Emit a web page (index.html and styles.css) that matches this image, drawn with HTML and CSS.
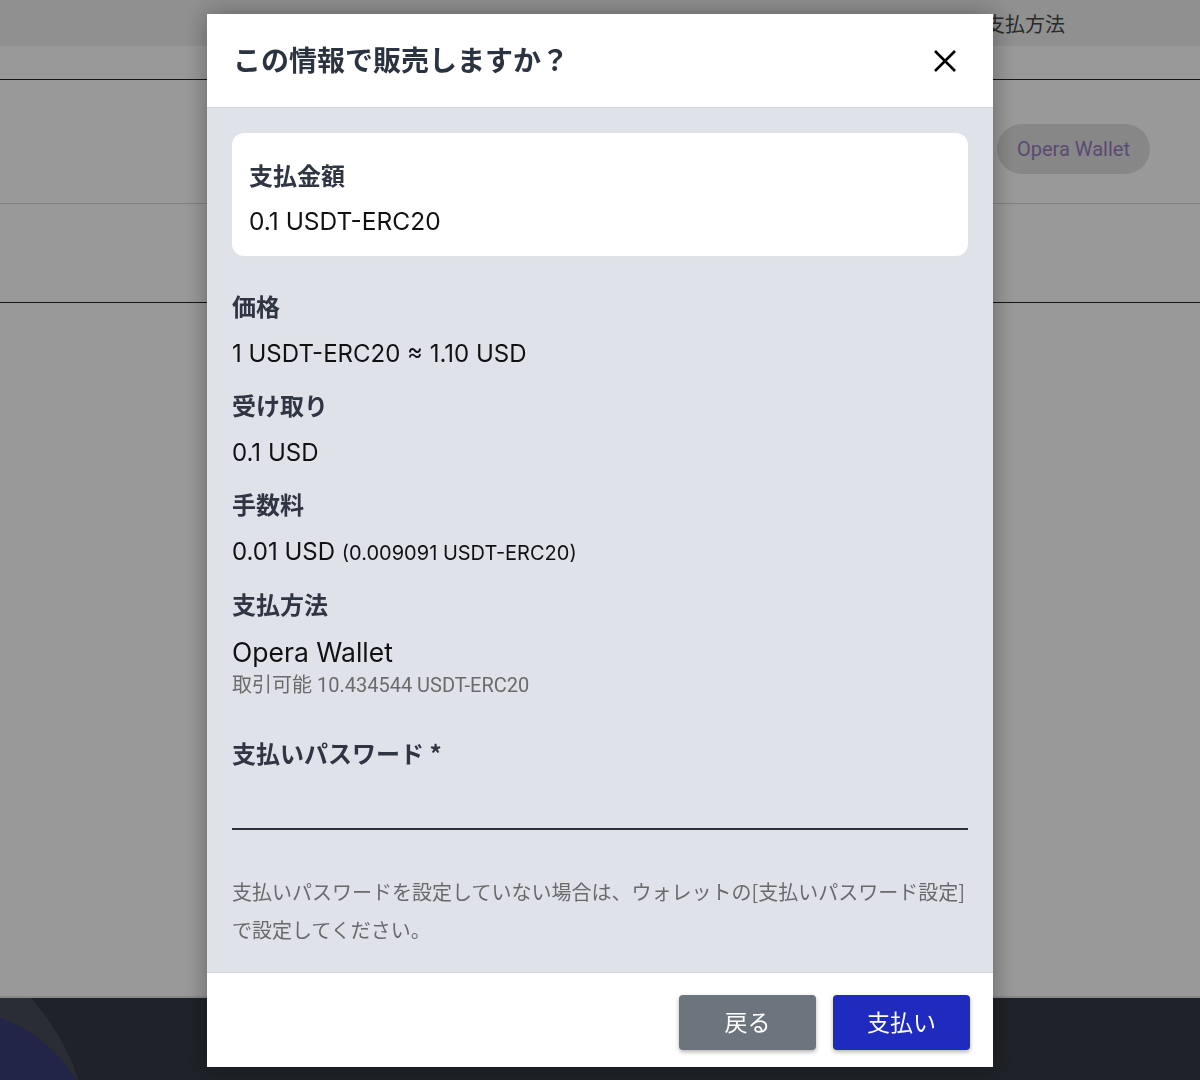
FILE: index.html
```html
<!DOCTYPE html>
<html lang="ja">
<head>
  <meta charset="UTF-8" />
  <title>販売確認</title>
  <link rel="stylesheet" href="styles.css">
</head>
<body>

  <div class="page">
    <div class="table-head">
      <span>通貨</span>
      <span>受け取り金額</span>
      <span>支払方法</span>
    </div>
    <div class="table-sub"></div>
    <div class="table-row first">
      <span class="chip">Opera Wallet</span>
    </div>
    <div class="table-row second"></div>
    <div class="spacer"></div>
    <div class="site-footer">
      <div class="deco-ring"></div>
      <div class="deco-circle"></div>
    </div>
  </div>

  <div class="overlay">
    <div class="modal">
      <div class="modal-header">
        <h2>この情報で販売しますか？</h2>
        <button class="close-btn" aria-label="閉じる">
          <svg width="24" height="24" viewBox="0 0 24 24">
            <path d="M2 2 L22 22 M22 2 L2 22" stroke="#000" stroke-width="2.6" fill="none" />
          </svg>
        </button>
      </div>

      <div class="modal-body">
        <div class="card">
          <div class="label">支払金額</div>
          <div class="value">0.1 USDT-ERC20</div>
        </div>

        <div class="item">
          <div class="label">価格</div>
          <div class="value">1 USDT-ERC20 ≈ 1.10 USD</div>
        </div>
        <div class="item">
          <div class="label">受け取り</div>
          <div class="value">0.1 USD</div>
        </div>
        <div class="item">
          <div class="label">手数料</div>
          <div class="value">0.01 USD <small>(0.009091 USDT-ERC20)</small></div>
        </div>
        <div class="item">
          <div class="label">支払方法</div>
          <div class="value wallet">Opera Wallet</div>
          <div class="available">取引可能 10.434544 USDT-ERC20</div>
        </div>

        <div class="field">
          <label class="label" for="payPass">支払いパスワード *</label>
          <input type="password" id="payPass" />
        </div>

        <p class="help">支払いパスワードを設定していない場合は、ウォレットの[支払いパスワード設定]で設定してください。</p>
      </div>

      <div class="modal-footer">
        <button class="btn btn-back">戻る</button>
        <button class="btn btn-pay">支払い</button>
      </div>
    </div>
  </div>

</body>
</html>
```

FILE: styles.css
```css
* { margin: 0; padding: 0; box-sizing: border-box; }
body {
  font-family: 'Noto Sans CJK JP', 'Noto Sans', sans-serif;
  background: white; height: 1080px; overflow: hidden;
}

/* page behind the dialog */
.page { height: 1080px; display: flex; flex-direction: column; }
.table-head {
  height: 46px; background: #f0f0f0; display: grid;
  grid-template-columns: 320px 325px auto; padding-left: 340px;
  align-items: center; font-size: 20px; color: #474747;
}
.table-sub { height: 34px; border-bottom: 1px solid #222; }
.table-row { border-bottom: 1px solid #d6d6d6; padding-left: 997px; }
.table-row.first { height: 124px; padding-top: 44px; }
.table-row.second { height: 99px; border-bottom-color: #222; }
.chip {
  display: inline-block; height: 50px; line-height: 50px; padding: 0 20px;
  border-radius: 25px; background: #e2e2e2; color: #987cbe;
  font-family: Roboto, sans-serif; font-size: 20px;
}
.spacer { flex: 1; }
.site-footer {
  height: 84px; background: #343a43; border-top: 2px solid #e6e6e6;
  position: relative; overflow: hidden;
}
.deco-ring {
  position: absolute; left: -370px; top: -76px; width: 460px; height: 460px;
  border-radius: 50%; background: #464b55;
}
.deco-circle {
  position: absolute; left: -198px; top: 11px; width: 296px; height: 296px;
  border-radius: 50%; background: #3b3f78;
}

/* dialog */
.overlay {
  position: fixed; inset: 0; background: rgba(0, 0, 0, 0.4);
  display: flex; justify-content: center; align-items: flex-start; padding-top: 14px;
}
.modal {
  width: 786px; background: white; box-shadow: 0 0 24px rgba(0, 0, 0, 0.35);
}
.modal-header {
  height: 94px; border-bottom: 1px solid #d4d4d4; padding: 0 36px 0 26px;
  display: flex; justify-content: space-between; align-items: center;
}
.modal-header h2 { font-size: 28px; font-weight: 700; color: #2c3340; margin-top: -4px; }
.close-btn { background: none; border: none; width: 24px; height: 24px; cursor: pointer; }
.close-btn svg { display: block; }

.modal-body { background: #dfe2e9; padding: 25px 25px 23px; }
.label {
  display: block; font-size: 24px; font-weight: 700; line-height: 30px; color: #2f3542;
}
.value {
  font-family: Inter, 'Noto Sans', sans-serif; font-size: 24px; line-height: 30px;
  color: #111; margin-top: 18px;
}
.value small { font-size: 20px; }
.card {
  background: white; border-radius: 12px; padding: 27px 17px 20px;
}
.card .value { margin-top: 16px; font-size: 24.5px; }
.item { margin-top: 21px; }
.card + .item { margin-top: 35px; }
.value.wallet { font-size: 26.5px; }
.available {
  font-family: Roboto, 'Noto Sans CJK JP', sans-serif; font-size: 20px; line-height: 24px;
  color: #6b6b6b; margin-top: 6px;
}

.field { margin-top: 41px; }
.field input {
  display: block; width: 100%; height: 62px; border: none; border-bottom: 2px solid #2c3340;
  background: transparent; outline: none; font-size: 20px;
}
.help {
  margin-top: 43px; font-size: 20px; line-height: 38px; color: #6a6a6a;
}

.modal-footer {
  border-top: 1px solid #d4d4d4; padding: 22px 23px 17px;
  display: flex; justify-content: flex-end; gap: 17px;
}
.btn {
  width: 137px; height: 55px; border: none; border-radius: 4px; color: white;
  font-family: 'Noto Sans CJK JP', sans-serif; font-size: 23px; cursor: pointer;
  padding-bottom: 3px; box-shadow: 0 2px 4px rgba(0, 0, 0, 0.3);
}
.btn-back { background: #6c757d; }
.btn-pay { background: #1f2bbf; }
```
